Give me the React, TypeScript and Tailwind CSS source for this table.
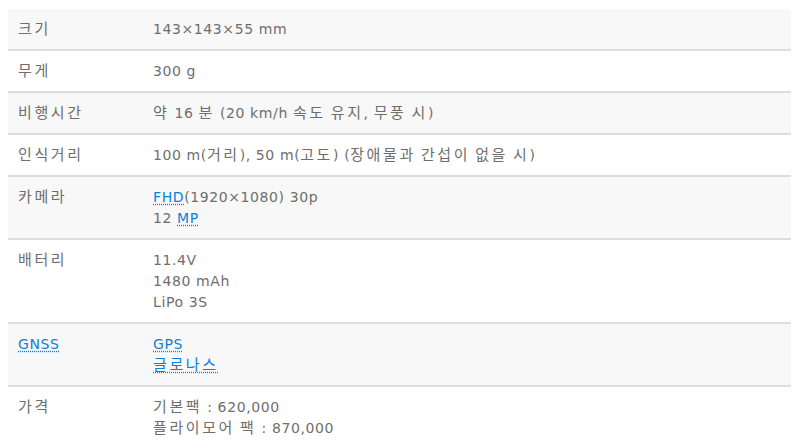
import React from "react";

function T({ s }: { s: string }) {
  const parts = s.split(/([\uAC00-\uD7A3]+)/);
  return (
    <>
      {parts.map((p, i) =>
        /[\uAC00-\uD7A3]/.test(p) ? (
          <span key={i} className="text-[15px] tracking-[2.6px]">
            {p}
          </span>
        ) : (
          <span key={i}>{p}</span>
        )
      )}
    </>
  );
}

const L = ({ s }: { s: string }) => (
  <span className="text-[#0a80dc] underline decoration-dotted decoration-[#0a80dc] underline-offset-[2px]">
    <T s={s} />
  </span>
);

type Row = { label: React.ReactNode; lines: React.ReactNode[] };

const rows: Row[] = [
  { label: <T s="크기" />, lines: [<T s="143×143×55 mm" />] },
  { label: <T s="무게" />, lines: [<T s="300 g" />] },
  { label: <T s="비행시간" />, lines: [<T s="약 16 분 (20 km/h 속도 유지, 무풍 시)" />] },
  { label: <T s="인식거리" />, lines: [<T s="100 m(거리), 50 m(고도) (장애물과 간섭이 없을 시)" />] },
  {
    label: <T s="카메라" />,
    lines: [
      <>
        <L s="FHD" />
        <T s="(1920×1080) 30p" />
      </>,
      <>
        <T s="12 " />
        <L s="MP" />
      </>,
    ],
  },
  { label: <T s="배터리" />, lines: [<T s="11.4V" />, <T s="1480 mAh" />, <T s="LiPo 3S" />] },
  { label: <L s="GNSS" />, lines: [<L s="GPS" />, <L s="글로나스" />] },
  { label: <T s="가격" />, lines: [<T s="기본팩 : 620,000" />, <T s="플라이모어 팩 : 870,000" />] },
];

export default function App() {
  return (
    <div className="w-[797px] h-[448px] overflow-hidden bg-white pt-[9px] px-[8px]">
      <div
        className="w-[783px] text-[14px] leading-[21px] text-[#6e6e6e] tracking-[0.6px]"
        style={{ fontFamily: '"DejaVu Sans", "Noto Sans CJK KR", sans-serif' }}
      >
        {rows.map((r, i) => (
          <div
            key={i}
            className={`flex border-b-2 border-[#dddddd] ${i % 2 === 0 ? "bg-[#f8f8f8]" : "bg-white"}`}
          >
            <div className="w-[135px] shrink-0 pl-[10px] pt-[10px] pb-[9px] whitespace-nowrap">{r.label}</div>
            <div className="flex flex-col pl-[10px] pt-[10px] pb-[9px] whitespace-nowrap">
              {r.lines.map((l, j) => (
                <div key={j} className="h-[21px]">
                  {l}
                </div>
              ))}
            </div>
          </div>
        ))}
      </div>
    </div>
  );
}
